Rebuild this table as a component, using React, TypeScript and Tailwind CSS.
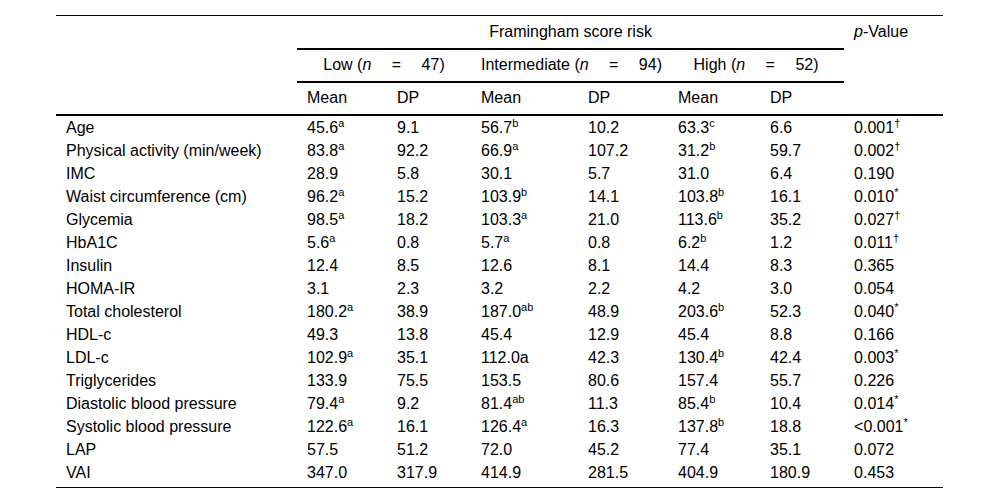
import React from "react";

type Cell = { v: string; s?: string };
type Row = { label: string; cells: Cell[]; p: Cell };

const c = (v: string, s?: string): Cell => ({ v, s });

const rows: Row[] = [
  { label: "Age", cells: [c("45.6", "a"), c("9.1"), c("56.7", "b"), c("10.2"), c("63.3", "c"), c("6.6")], p: c("0.001", "†") },
  { label: "Physical activity (min/week)", cells: [c("83.8", "a"), c("92.2"), c("66.9", "a"), c("107.2"), c("31.2", "b"), c("59.7")], p: c("0.002", "†") },
  { label: "IMC", cells: [c("28.9"), c("5.8"), c("30.1"), c("5.7"), c("31.0"), c("6.4")], p: c("0.190") },
  { label: "Waist circumference (cm)", cells: [c("96.2", "a"), c("15.2"), c("103.9", "b"), c("14.1"), c("103.8", "b"), c("16.1")], p: c("0.010", "*") },
  { label: "Glycemia", cells: [c("98.5", "a"), c("18.2"), c("103.3", "a"), c("21.0"), c("113.6", "b"), c("35.2")], p: c("0.027", "†") },
  { label: "HbA1C", cells: [c("5.6", "a"), c("0.8"), c("5.7", "a"), c("0.8"), c("6.2", "b"), c("1.2")], p: c("0.011", "†") },
  { label: "Insulin", cells: [c("12.4"), c("8.5"), c("12.6"), c("8.1"), c("14.4"), c("8.3")], p: c("0.365") },
  { label: "HOMA-IR", cells: [c("3.1"), c("2.3"), c("3.2"), c("2.2"), c("4.2"), c("3.0")], p: c("0.054") },
  { label: "Total cholesterol", cells: [c("180.2", "a"), c("38.9"), c("187.0", "ab"), c("48.9"), c("203.6", "b"), c("52.3")], p: c("0.040", "*") },
  { label: "HDL-c", cells: [c("49.3"), c("13.8"), c("45.4"), c("12.9"), c("45.4"), c("8.8")], p: c("0.166") },
  { label: "LDL-c", cells: [c("102.9", "a"), c("35.1"), c("112.0a"), c("42.3"), c("130.4", "b"), c("42.4")], p: c("0.003", "*") },
  { label: "Triglycerides", cells: [c("133.9"), c("75.5"), c("153.5"), c("80.6"), c("157.4"), c("55.7")], p: c("0.226") },
  { label: "Diastolic blood pressure", cells: [c("79.4", "a"), c("9.2"), c("81.4", "ab"), c("11.3"), c("85.4", "b"), c("10.4")], p: c("0.014", "*") },
  { label: "Systolic blood pressure", cells: [c("122.6", "a"), c("16.1"), c("126.4", "a"), c("16.3"), c("137.8", "b"), c("18.8")], p: c("<0.001", "*") },
  { label: "LAP", cells: [c("57.5"), c("51.2"), c("72.0"), c("45.2"), c("77.4"), c("35.1")], p: c("0.072") },
  { label: "VAI", cells: [c("347.0"), c("317.9"), c("414.9"), c("281.5"), c("404.9"), c("180.9")], p: c("0.453") },
];

function V({ cell }: { cell: Cell }) {
  return (
    <>
      {cell.v}
      {cell.s ? <sup className="text-[11px]">{cell.s}</sup> : null}
    </>
  );
}

const N = (label: string, n: string) => (
  <>
    {label} (<i>n</i>
    {"\u00a0\u2003=\u2003\u00a0"}
    {n})
  </>
);

export default function App() {
  const td = "px-[10px] py-0 h-[23px] leading-[23px] text-left font-normal whitespace-nowrap";
  const th = "px-[10px] py-0 h-[33px] leading-[18px] font-normal whitespace-nowrap";
  return (
    <div
      className="w-[1000px] h-[504px] bg-white text-black text-[16px] pt-[15px] pl-[56px]"
      style={{ fontFamily: '"Liberation Sans", Arial, sans-serif' }}
    >
      <table className="table-fixed border-collapse w-[887px] border-t border-b border-black">
        <colgroup>
          <col className="w-[241px]" />
          <col className="w-[90px]" />
          <col className="w-[84px]" />
          <col className="w-[107px]" />
          <col className="w-[90px]" />
          <col className="w-[92px]" />
          <col className="w-[84px]" />
          <col className="w-[99px]" />
        </colgroup>
        <thead>
          <tr>
            <th rowSpan={3} className={`${th} border-b-2 border-black`}></th>
            <th colSpan={6} className={`${th} text-center border-b-2 border-black`}>
              Framingham score risk
            </th>
            <th rowSpan={3} className={`${th} text-left align-top pt-[7px] border-b-2 border-black`}>
              <i>p</i>-Value
            </th>
          </tr>
          <tr>
            <th colSpan={2} className={`${th} text-center border-b-2 border-black`}>
              {N("Low", "47")}
            </th>
            <th colSpan={2} className={`${th} text-center border-b-2 border-black`}>
              {N("Intermediate", "94")}
            </th>
            <th colSpan={2} className={`${th} text-center border-b-2 border-black`}>
              {N("High", "52")}
            </th>
          </tr>
          <tr>
            {["Mean", "DP", "Mean", "DP", "Mean", "DP"].map((h, i) => (
              <th key={i} className={`${th} text-left border-b-2 border-black`}>
                {h}
              </th>
            ))}
          </tr>
        </thead>
        <tbody>
          {rows.map((r, i) => (
            <tr key={r.label}>
              <td className={`${td} ${i === rows.length - 1 ? "pb-[3px]" : ""}`}>{r.label}</td>
              {r.cells.map((cell, j) => (
                <td key={j} className={`${td} ${i === rows.length - 1 ? "pb-[3px]" : ""}`}>
                  <V cell={cell} />
                </td>
              ))}
              <td className={`${td} ${i === rows.length - 1 ? "pb-[3px]" : ""}`}>
                <V cell={r.p} />
              </td>
            </tr>
          ))}
        </tbody>
      </table>
    </div>
  );
}
